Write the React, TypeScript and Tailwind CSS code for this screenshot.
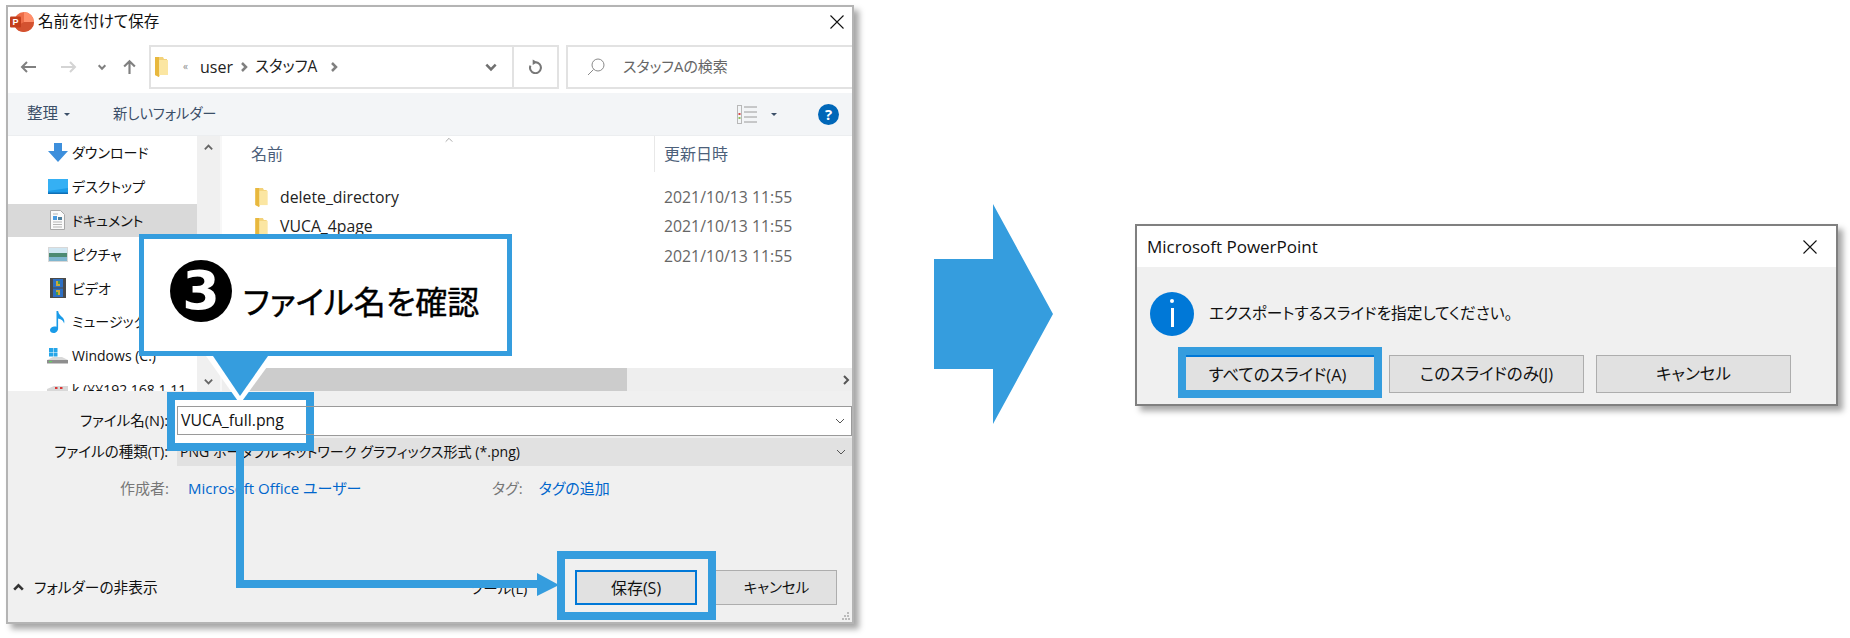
import React from "react";

const BLUE = "#359dde";

const Chevron = ({ dir = "down", className = "" }: { dir?: "down" | "up" | "left" | "right"; className?: string }) => {
  const points = {
    down: "2,4 6,8 10,4",
    up: "2,8 6,4 10,8",
    left: "8,2 4,6 8,10",
    right: "4,2 8,6 4,10",
  }[dir];
  return (
    <svg viewBox="0 0 12 12" className={className} fill="none" stroke="currentColor">
      <polyline points={points} />
    </svg>
  );
};

const FolderIcon = ({ className = "" }: { className?: string }) => (
  <svg viewBox="0 0 13 20" className={className}>
    <path d="M0 0h8l1 2h3v16l-7 0-1 2-4-2z" fill="#f3d27a" />
    <path d="M4 3h9v15H4z" fill="#fbe6a2" />
    <path d="M0 0h4v20L0 18z" fill="#e8b83e" />
  </svg>
);

const DownloadIcon = () => (
  <svg viewBox="0 0 20 20" className="w-[20px] h-[20px]">
    <path d="M6 0h8v8h6L10 19 0 8h6z" fill="#3d8fdc" />
  </svg>
);

const DesktopIcon = () => (
  <svg viewBox="0 0 20 15" className="w-[20px] h-[15px]">
    <rect width="20" height="15" fill="#1b9be8" />
    <path d="M0 0h20v9L0 12z" fill="#35b0f4" />
    <rect y="13.5" width="20" height="1.5" fill="#0f6fb5" />
  </svg>
);

const DocumentIcon = () => (
  <svg viewBox="0 0 15 20" className="w-[15px] h-[20px]">
    <path d="M.5.5h10l4 4v15H.5z" fill="#fafafa" stroke="#a8a8a8" />
    <path d="M3 4h5M3 12h9M3 14.5h9M3 17h9" stroke="#b5b5b5" />
    <path d="M3 6h4v4H3z" fill="#4a9be0" />
    <path d="M8 7h4v3H8z" fill="#4f7f9c" />
  </svg>
);

const PictureIcon = () => (
  <svg viewBox="0 0 20 15" className="w-[20px] h-[15px]">
    <rect width="20" height="15" fill="#d8d8d8" />
    <rect x="1" y="1" width="18" height="5" fill="#cfe6f2" />
    <rect x="1" y="6" width="18" height="4" fill="#4d8a72" />
    <rect x="1" y="10" width="18" height="4" fill="#7fb6cf" />
  </svg>
);

const VideoIcon = () => (
  <svg viewBox="0 0 16 20" className="w-[16px] h-[20px]">
    <rect width="16" height="20" fill="#4a4a4a" />
    <rect x="3" y="1" width="10" height="8.5" fill="#2d6fc4" />
    <rect x="3" y="10.5" width="10" height="8.5" fill="#2d6fc4" />
    <path d="M6 3h4v5H6zM6 12h4v5H6z" fill="#c9a93a" />
    <path d="M8 3h2v3H8zM6 14h2v3H6z" fill="#3e9b4f" />
  </svg>
);

const MusicIcon = () => (
  <svg viewBox="0 0 16 22" className="w-[16px] h-[22px]">
    <path d="M6.5 0h1.6c.6 3.5 2.5 4.5 4.5 6.500 1.500 1.500 2.200 3.500 1.500 6-.6-2.500-2.500-4.500-6-5v10c0 2.500-2.200 4.500-4.500 4.500C1.500 22 0 20.800 0 19.200c0-2.200 2.500-3.700 4.800-3.700.7 0 1.200.1 1.700.3z" fill="#1a9be8" />
  </svg>
);

const DriveIcon = () => (
  <svg viewBox="0 0 21 16" className="w-[21px] h-[16px]">
    <path d="M2 0h4v4H2zM6.500 0h4v4h-4zM2 4.500h4v4H2zM6.500 4.500h4v4h-4z" fill="#26a5e8" />
    <path d="M0 12l6-3h9l6 3v3H0z" fill="#d9d9d9" />
    <path d="M0 12h21v3.500H0z" fill="#8e8e8e" />
    <rect x="2" y="13" width="3" height="1.200" fill="#5fd35f" />
  </svg>
);

const NetworkIcon = () => (
  <svg viewBox="0 0 21 16" className="w-[21px] h-[16px]">
    <path d="M0 8l7-3h14v11H0z" fill="#d8d8d8" />
    <rect x="8" y="6" width="2.500" height="2" fill="#d93636" />
    <rect x="13" y="6" width="2.500" height="2" fill="#d93636" />
  </svg>
);

const PowerPointIcon = () => (
  <svg viewBox="0 0 24 20" className="w-[24px] h-[20px]">
    <circle cx="14" cy="10" r="10" fill="#ed6c47" />
    <path d="M14 0a10 10 0 0 1 10 10H14z" fill="#ff8f6b" />
    <path d="M14 10h10a10 10 0 0 1-10 10 10 10 0 0 1-9-5z" fill="#d35230" />
    <rect x="0" y="4.500" width="11" height="11" rx="1" fill="#c43e1c" />
    <text x="5.500" y="13" textAnchor="middle" fontSize="9" fontWeight="700" fill="#fff" fontFamily="Liberation Sans">P</text>
  </svg>
);

const navItems = [
  { label: "ダウンロード", icon: <DownloadIcon /> },
  { label: "デスクトップ", icon: <DesktopIcon /> },
  { label: "ドキュメント", icon: <DocumentIcon />, selected: true },
  { label: "ピクチャ", icon: <PictureIcon /> },
  { label: "ビデオ", icon: <VideoIcon /> },
  { label: "ミュージック", icon: <MusicIcon /> },
  { label: "Windows (C:)", icon: <DriveIcon /> },
  { label: "k (¥¥192.168.1.11", icon: <NetworkIcon /> },
];

const files = [
  { name: "delete_directory", date: "2021/10/13 11:55" },
  { name: "VUCA_4page", date: "2021/10/13 11:55" },
  { name: "", date: "2021/10/13 11:55" },
];

const SaveDialog = () => (
  <div className="ml-[6px] mt-[5px] w-[848px] h-[619px] shrink-0 flex flex-col border-2 border-[#b4b4b4] bg-white shadow-[5px_5px_6px_rgba(0,0,0,0.35)] text-[#111]">
    {/* title */}
    <div className="h-[33px] flex items-center pl-[2px] pr-[8px] pb-[4px] shrink-0">
      <PowerPointIcon />
      <span className="ml-[4px] text-[15.500px]">名前を付けて保存</span>
      <svg viewBox="0 0 14 14" className="ml-auto w-[14px] h-[14px]" stroke="#111" strokeWidth="1.100">
        <path d="M.5.500l13 13M13.500.500l-13 13" />
      </svg>
    </div>

    {/* address bar */}
    <div className="h-[53px] flex items-center shrink-0 pl-[12px] text-[#777]">
      <svg viewBox="0 0 16 12" className="w-[16px] h-[12px]" fill="none" stroke="#808080" strokeWidth="2">
        <path d="M16 6H2M7 1L2 6l5 5" />
      </svg>
      <svg viewBox="0 0 16 12" className="ml-[25px] w-[16px] h-[12px]" fill="none" stroke="#d4d4d4" strokeWidth="2">
        <path d="M0 6h14M9 1l5 5-5 5" />
      </svg>
      <Chevron className="ml-[20px] w-[10px] h-[10px] text-[#808080] [stroke-width:2.5]" />
      <svg viewBox="0 0 12 14" className="ml-[16px] w-[13px] h-[15px]" fill="none" stroke="#808080" strokeWidth="2">
        <path d="M6 14V2M1 7l5-5 5 5" />
      </svg>
      <div className="ml-[13px] w-[410px] h-[44px] border-2 border-[#e2e2e2] flex items-center text-[#222]">
        <FolderIcon className="ml-[4px] w-[13px] h-[20px]" />
        <span className="ml-[15px] text-[#888] text-[10px]">«</span>
        <span className="ml-[12px] text-[16px]">user</span>
        <Chevron dir="right" className="ml-[5px] w-[12px] h-[12px] text-[#808080] [stroke-width:2.5]" />
        <span className="ml-[5px] text-[15.500px]">スタッフA</span>
        <Chevron dir="right" className="ml-[11px] w-[12px] h-[12px] text-[#808080] [stroke-width:2.5]" />
        <Chevron className="ml-auto mr-[14px] w-[14px] h-[14px] text-[#707070] [stroke-width:2.2]" />
        <div className="w-[45px] h-full border-l-2 border-[#e2e2e2] flex items-center justify-center">
          <svg viewBox="0 0 16 16" className="w-[15px] h-[15px]" fill="none" stroke="#777" strokeWidth="2.200">
            <path d="M8 3.500a5.800 5.800 0 1 1-5.400 3.600" />
            <path d="M5 .5l5 3-5 3z" fill="#777" stroke="none" />
          </svg>
        </div>
      </div>
      <div className="ml-[7px] flex-1 h-[44px] border-2 border-r-0 border-[#e2e2e2] flex items-center text-[#666]">
        <svg viewBox="0 0 18 18" className="ml-[19px] w-[18px] h-[18px]" fill="none" stroke="#8a8a8a">
          <circle cx="11" cy="7" r="6" />
          <path d="M6.500 11.500L1 17" />
        </svg>
        <span className="ml-[18px] text-[15px]">スタッフAの検索</span>
      </div>
    </div>

    {/* toolbar */}
    <div className="h-[43px] shrink-0 flex items-center bg-[#f3f5f7] border-b border-[#eceef0] text-[#3b4f68] text-[14.300px]">
      <span className="ml-[19px] text-[15.500px]">整理</span>
      <span className="ml-[6px] w-0 h-0 border-x-[3px] border-x-transparent border-t-[3px] border-t-[#3b4f68]" />
      <span className="ml-[43px]">新しいフォルダー</span>
      <svg viewBox="0 0 20 19" className="ml-auto w-[20px] h-[19px]" fill="none" stroke="#9a9a9a">
        <path d="M7 2h13M7 7h13M7 12h13M7 17h13" />
        <rect x=".5" y=".5" width="4" height="18" stroke="#b8b8b8" />
        <rect x="1.500" y="8" width="2" height="2" fill="#d64545" stroke="none" />
        <rect x="1.500" y="12" width="2" height="2" fill="#8fbf5a" stroke="none" />
      </svg>
      <span className="ml-[14px] w-0 h-0 border-x-[3px] border-x-transparent border-t-[3px] border-t-[#3b4f68]" />
      <div className="ml-[41px] mr-[13px] w-[21px] h-[21px] rounded-full bg-[#0067b8] text-white text-[15px] font-bold flex items-center justify-center">
        ?
      </div>
    </div>

    {/* panes */}
    <div className="h-[255px] shrink-0 flex overflow-hidden">
      <div className="w-[189px] shrink-0 overflow-hidden">
        {navItems.map((item) => (
          <div
            key={item.label}
            className={`h-[33.800px] flex items-center text-[14px] whitespace-nowrap ${item.selected ? "bg-[#d9d9d9]" : ""}`}
          >
            <div className="w-[64px] pl-[39px] shrink-0 flex justify-center pr-[4px]">{item.icon}</div>
            <span>{item.label}</span>
          </div>
        ))}
      </div>
      <div className="w-[23px] shrink-0 bg-[#f0f0f0] flex flex-col items-center justify-between py-[6px] pb-[4px] text-[#666]">
        <Chevron dir="up" className="w-[11px] h-[11px] [stroke-width:2]" />
        <Chevron className="w-[11px] h-[11px] [stroke-width:2]" />
      </div>
      <div className="flex-1 flex flex-col min-w-0 border-l-2 border-[#f7f7f7]">
        <div className="h-[36px] shrink-0 flex text-[16px] text-[#4c607a] relative">
          <span className="ml-[29px] w-[403px] self-center">名前</span>
          <Chevron dir="up" className="absolute left-[221px] top-[-1px] w-[12px] h-[10px] text-[#999]" />
          <span className="border-l border-[#e8e8e8] pl-[9px] self-stretch flex items-center">更新日時</span>
        </div>
        <div className="flex-1 pt-[11px]">
          {files.map((file) => (
            <div key={file.date + file.name} className="h-[29.500px] flex items-center text-[15.800px]">
              <div className="ml-[33px] w-[25px]">{file.name && <FolderIcon className="w-[13px] h-[19px]" />}</div>
              <span className="w-[384px] text-[#222]">{file.name}</span>
              <span className="text-[#666]">{file.date}</span>
            </div>
          ))}
        </div>
        <div className="h-[23px] shrink-0 bg-[#eeeeee] flex items-center text-[#555]">
          <div className="ml-[20px] w-[385px] h-full bg-[#cccccc]" />
          <Chevron dir="right" className="ml-auto mr-[0px] w-[12px] h-[12px] [stroke-width:2]" />
        </div>
      </div>
    </div>

    {/* bottom form */}
    <div className="flex-1 flex flex-col bg-[#f0f0f0] pt-[15px] pb-[17px] text-[14.500px]">
      <div className="flex items-center h-[30px]">
        <span className="w-[169px] shrink-0 text-right pr-[9px]">ファイル名(N):</span>
        <div className="flex-1 h-full bg-white border border-[#9a9a9a] flex items-center justify-end pr-[5px] text-[#555]">
          <Chevron className="w-[12px] h-[12px]" />
        </div>
      </div>
      <div className="flex items-center h-[28px] mt-[2px]">
        <span className="w-[169px] shrink-0 text-right pr-[9px]">ファイルの種類(T):</span>
        <div className="flex-1 h-full bg-[#e1e1e1] flex items-center pl-[3px] pr-[5px] whitespace-nowrap text-[14.100px] text-[#111]">
          PNG ポータブル ネットワーク グラフィックス形式 (*.png)
          <Chevron className="ml-auto w-[12px] h-[12px] text-[#555]" />
        </div>
      </div>
      <div className="flex items-center mt-[11px] h-[22px] text-[15px]">
        <span className="ml-[112px] text-[#777]">作成者:</span>
        <span className="ml-[19px] text-[#0066cc] w-[304px]">Microsoft Office ユーザー</span>
        <span className="text-[#777]">タグ:</span>
        <span className="ml-[16px] text-[#0066cc]">タグの追加</span>
      </div>
      <div className="mt-auto flex items-center h-[35px] relative">
        <Chevron dir="up" className="ml-[4px] w-[13px] h-[13px] text-[#333] [stroke-width:2.4]" />
        <span className="ml-[9px] text-[14.700px] w-[125px] shrink-0 whitespace-nowrap">フォルダーの非表示</span>
        <span className="ml-[311px] mt-[2px] w-[62px] shrink-0 whitespace-nowrap">ツール(L)</span>
        <div className="ml-[43px] w-[122px] shrink-0 h-full bg-[#e1e1e1] border-2 border-[#0078d7] flex items-center justify-center text-[16px]">
          保存(S)
        </div>
        <div className="ml-[11px] w-[129px] shrink-0 h-full bg-[#e1e1e1] border border-[#adadad] flex items-center justify-center pl-[8px] text-[14.500px]">
          キャンセル
        </div>
        <svg viewBox="0 0 8 8" className="absolute right-[2px] bottom-[-15px] w-[8px] h-[8px]" fill="#bbb">
          <path d="M5 0h2v2H5zM2 3h2v2H2zM5 3h2v2H5zM0 6h2v2H0zM3 6h2v2H3zM6 6h2v2H6z" />
        </svg>
      </div>
    </div>
  </div>
);

const ExportDialog = () => (
  <div className="ml-[82px] mt-[224px] w-[703px] h-[182px] shrink-0 flex flex-col border-2 border-[#808080] bg-white shadow-[5px_5px_6px_rgba(0,0,0,0.35)] text-[#111]">
    <div className="h-[41px] shrink-0 flex items-center pl-[10px] pr-[19px] text-[17px]">
      <span>Microsoft PowerPoint</span>
      <svg viewBox="0 0 14 14" className="ml-auto w-[14px] h-[14px]" stroke="#111" strokeWidth="1.100">
        <path d="M.5.500l13 13M13.500.500l-13 13" />
      </svg>
    </div>
    <div className="flex-1 bg-[#f0f0f0] pt-[25px]">
      <div className="flex items-center pl-[13px]">
        <div className="relative w-[44px] h-[44px] rounded-full bg-[#0078d7] flex items-center justify-center">
          <div className="w-[3px] h-[19px] bg-white mt-[7px]" />
          <div className="absolute top-[7px] left-[20px] w-[4px] h-[4px] rounded-full bg-white" />
        </div>
        <span className="ml-[15px] text-[15.700px]">エクスポートするスライドを指定してください。</span>
      </div>
      <div className="mt-[19px] ml-[49px] flex text-[16.500px]">
        <div className="w-[191px] h-[38px] bg-[#e1e1e1] border-t-2 border-[#0078d7] flex items-center justify-center pr-[8px]">
          すべてのスライド(A)
        </div>
        <div className="ml-[12px] w-[195px] h-[38px] bg-[#e1e1e1] border border-[#adadad] flex items-center justify-center">
          このスライドのみ(J)
        </div>
        <div className="ml-[12px] w-[195px] h-[38px] bg-[#e1e1e1] border border-[#adadad] flex items-center justify-center">
          キャンセル
        </div>
      </div>
    </div>
  </div>
);

export default function App() {
  return (
    <div className="relative w-[1850px] h-[638px] overflow-hidden flex items-start bg-white [font-family:'Open_Sans','Noto_Sans_CJK_JP',sans-serif] [font-feature-settings:'palt']">
      <SaveDialog />

      <svg viewBox="0 0 119 220" className="ml-[80px] mt-[204px] w-[119px] h-[220px] shrink-0">
        <path d="M0 55h59V0l60 110-60 110V165H0z" fill={BLUE} />
      </svg>

      <ExportDialog />

      {/* annotations over the save dialog */}
      <svg viewBox="0 0 1850 638" className="absolute left-0 top-0 w-[1850px] h-[638px] pointer-events-none">
        <path d="M240 451V584H545" fill="none" stroke={BLUE} strokeWidth="8" />
        <path d="M537 573l22 12-22 11z" fill={BLUE} />
      </svg>

      <div className="absolute left-[167px] top-[392px] w-[147px] h-[59px] border-[8px] border-[#359dde] bg-white">
        <div className="absolute left-[2px] top-[6px] right-[-8px] h-[29px] border border-[#9a9a9a] border-r-0 flex items-center pl-[3px] text-[15.800px] text-[#111]">
          VUCA_full.png
        </div>
      </div>

      <svg viewBox="0 0 80 50" className="absolute left-[200px] top-[356px] w-[80px] h-[50px]">
        <path d="M6 0h69L40 48z" fill="#fff" />
        <path d="M13 0h55L40 40z" fill={BLUE} />
      </svg>

      <div className="absolute left-[139px] top-[234px] w-[373px] h-[122px] border-[5px] border-[#359dde] bg-white flex items-center text-black">
        <div className="ml-[26px] mb-[8px] w-[62px] h-[62px] rounded-full bg-black text-white flex items-center justify-center text-[54px] font-bold leading-none [font-family:'DejaVu_Sans',sans-serif]">
          3
        </div>
        <span className="ml-[11px] mt-[14px] text-[32px] leading-none whitespace-nowrap [-webkit-text-stroke:0.4px_black]">ファイル名を確認</span>
      </div>

      <div className="absolute left-[557px] top-[551px] w-[159px] h-[69px] border-[8px] border-[#359dde]" />
      <div className="absolute left-[1178px] top-[347px] w-[204px] h-[51px] border-[8px] border-[#359dde]" />
    </div>
  );
}
